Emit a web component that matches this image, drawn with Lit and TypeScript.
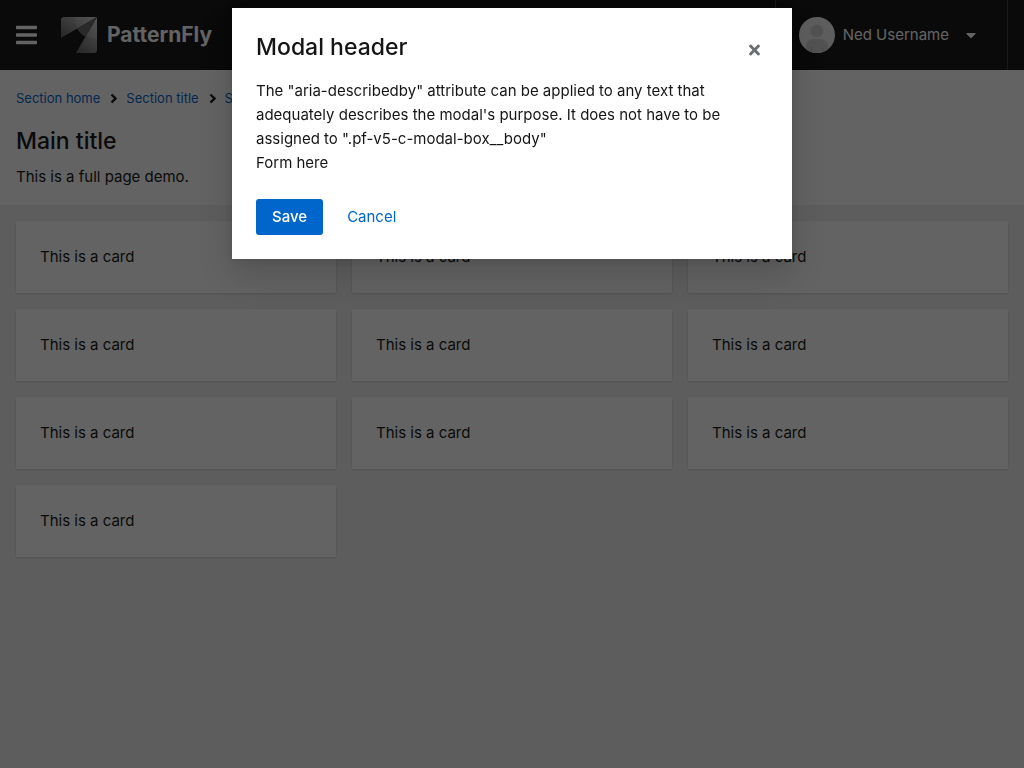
import { LitElement, html, css } from "lit";
import { customElement, state } from "lit/decorators.js";

const crumbs = ["Section home", "Section title", "Section title"];
const cards = Array.from({ length: 10 }, () => "This is a card");

@customElement("app-root")
export class AppRoot extends LitElement {
  @state() private modalOpen = true;

  static styles = css`
    :host {
      display: block;
      min-height: 100vh;
      background: #f0f0f0;
      color: #151515;
      font-family: Inter, "Liberation Sans", sans-serif;
      font-size: 15px;
      line-height: 24px;
    }
    * {
      box-sizing: border-box;
    }
    h1,
    p,
    ol,
    ul {
      margin: 0;
      padding: 0;
      list-style: none;
    }
    button {
      border: 0;
      background: none;
      color: inherit;
      font: inherit;
      cursor: pointer;
    }
    svg {
      display: block;
    }
    a {
      color: #06c;
      text-decoration: none;
    }
    .masthead {
      display: flex;
      align-items: center;
      height: 70px;
      padding: 0 16px;
      background: #151515;
      color: #fff;
    }
    .toggle {
      padding: 0;
      margin-right: 24px;
    }
    .brand {
      display: flex;
      align-items: center;
      gap: 10px;
      color: #fff;
      font-size: 21px;
      font-weight: 700;
    }
    .user {
      display: flex;
      align-items: center;
      gap: 8px;
      height: 100%;
      margin-left: auto;
      padding: 0 31px 0 23px;
      border: solid #3c3f42;
      border-width: 0 1px;
    }
    .caret {
      margin-left: 9px;
    }
    .intro {
      padding: 16px;
      background: #fff;
    }
    .crumbs {
      display: flex;
      margin-bottom: 16px;
      font-size: 13px;
    }
    .crumbs li {
      display: flex;
      align-items: center;
      white-space: nowrap;
    }
    .sep {
      margin: 0 9px 0 10px;
    }
    .title {
      font-size: 23px;
      line-height: 31px;
      font-weight: 500;
    }
    .intro .title {
      margin-bottom: 8px;
    }
    .cards {
      display: grid;
      grid-template-columns: repeat(auto-fill, minmax(250px, 1fr));
      gap: 16px;
      padding: 16px;
    }
    .card {
      padding: 24px;
      background: #fff;
      box-shadow: 0 1px 2px rgba(3, 3, 3, 0.12), 0 0 2px rgba(3, 3, 3, 0.06);
    }
    .backdrop {
      position: fixed;
      inset: 0;
      display: flex;
      justify-content: center;
      align-items: flex-start;
      padding: 8px;
      background: rgba(3, 3, 3, 0.62);
    }
    .modal {
      position: relative;
      width: 100%;
      max-width: 560px;
      padding: 24px;
      background: #fff;
      box-shadow: 0 16px 32px rgba(3, 3, 3, 0.16), 0 0 8px rgba(3, 3, 3, 0.1);
    }
    .modal .title {
      margin: 0 48px 16px 0;
    }
    .close {
      position: absolute;
      top: 24px;
      right: 16px;
      padding: 10px 16px;
      color: #6a6e73;
    }
    .actions {
      display: flex;
      gap: 8px;
      margin-top: 24px;
    }
    .btn {
      padding: 6px 16px;
      border-radius: 3px;
      color: #06c;
    }
    .primary {
      background: #06c;
      color: #fff;
      font-weight: 500;
    }
  `;

  private close() {
    this.modalOpen = false;
  }

  private renderMasthead() {
    return html`
      <header class="masthead">
        <button class="toggle" aria-label="Global navigation">
          <svg width="21" height="24" viewBox="0 0 448 512" fill="currentColor">
            <path
              d="M16 132h416c8.837 0 16-7.163 16-16V76c0-8.837-7.163-16-16-16H16C7.163 60 0 67.163 0 76v40c0 8.837 7.163 16 16 16zm0 160h416c8.837 0 16-7.163 16-16v-40c0-8.837-7.163-16-16-16H16c-8.837 0-16 7.163-16 16v40c0 8.837 7.163 16 16 16zm0 160h416c8.837 0 16-7.163 16-16v-40c0-8.837-7.163-16-16-16H16c-8.837 0-16 7.163-16 16v40c0 8.837 7.163 16 16 16z"
            />
          </svg>
        </button>
        <a class="brand" href="#">
          <svg width="36" height="36" viewBox="0 0 36 36" aria-hidden="true">
            <defs>
              <linearGradient id="wing" x1="1" y1="0" x2="0" y2="1">
                <stop offset="0" stop-color="#d0d0d0" />
                <stop offset="1" stop-color="#5c5c5c" />
              </linearGradient>
              <linearGradient id="tail" x1="0.8" y1="0" x2="0.3" y2="1">
                <stop offset="0" stop-color="#cccccc" />
                <stop offset="1" stop-color="#6a6a6a" />
              </linearGradient>
              <clipPath id="pieces">
                <path d="M0 21V3a3 3 0 0 1 3-3H36V33a3 3 0 0 1-3 3H15L36 0z" />
              </clipPath>
            </defs>
            <path d="M0 21V3a3 3 0 0 1 3-3H36z" fill="url(#wing)" />
            <path d="M36 0V33a3 3 0 0 1-3 3H15z" fill="url(#tail)" />
            <circle cx="36" cy="0" r="22" fill="#fff" opacity="0.14" clip-path="url(#pieces)" />
            <path d="M36 0L16 11.5Q19 17 24.5 20z" fill="#6a6a6a" />
          </svg>
          PatternFly
        </a>
        <button class="user">
          <svg width="36" height="36" viewBox="0 0 36 36" aria-hidden="true">
            <clipPath id="round"><circle cx="18" cy="18" r="18" /></clipPath>
            <g clip-path="url(#round)">
              <path fill="#f0f0f0" d="M0 0h36v36H0z" />
              <circle cx="18" cy="14" r="6.5" fill="#d2d2d2" />
              <path
                fill="#d2d2d2"
                d="M7 36v-6c0-5 3-8 8-8h6c5 0 8 3 8 8v6z"
              />
              <path fill="#b8bbbe" d="M12 30h1v6h-1zM23 30h1v6h-1z" />
            </g>
          </svg>
          <span>Ned Username</span>
          <svg class="caret" width="10" height="16" viewBox="0 0 320 512" fill="currentColor" aria-hidden="true">
            <path
              d="M31.3 192h257.3c17.8 0 26.7 21.5 14.1 34.1L174.1 354.8c-7.8 7.8-20.5 7.8-28.3 0L17.2 226.1C4.6 213.5 13.5 192 31.3 192z"
            />
          </svg>
        </button>
      </header>
    `;
  }

  private renderModal() {
    return html`
      <div class="backdrop">
        <div
          class="modal"
          role="dialog"
          aria-modal="true"
          aria-labelledby="modal-title"
          aria-describedby="modal-text"
        >
          <button class="close" aria-label="Close" @click=${this.close}>
            <svg width="11" height="16" viewBox="0 0 352 512" fill="currentColor">
              <path
                d="M242.72 256l100.07-100.07c12.28-12.28 12.28-32.19 0-44.48l-22.24-22.24c-12.28-12.28-32.19-12.28-44.48 0L176 189.28 75.93 89.21c-12.28-12.28-32.19-12.28-44.48 0L9.21 111.45c-12.28 12.28-12.28 32.19 0 44.48L109.28 256 9.21 356.07c-12.28 12.28-12.28 32.19 0 44.48l22.24 22.24c12.28 12.28 32.2 12.28 44.48 0L176 322.72l100.07 100.07c12.28 12.28 32.2 12.28 44.48 0l22.24-22.24c12.28-12.28 12.28-32.19 0-44.48L242.72 256z"
              />
            </svg>
          </button>
          <h1 class="title" id="modal-title">Modal header</h1>
          <p id="modal-text">
            The "aria-describedby" attribute can be applied to any text that
            adequately describes the modal's purpose. It does not have to be
            assigned to ".pf-v5-c-modal-box__body"
          </p>
          <p>Form here</p>
          <div class="actions">
            <button class="btn primary" @click=${this.close}>Save</button>
            <button class="btn" @click=${this.close}>Cancel</button>
          </div>
        </div>
      </div>
    `;
  }

  render() {
    return html`
      ${this.renderMasthead()}
      <main>
        <section class="intro">
          <nav aria-label="Breadcrumb">
            <ol class="crumbs">
              ${crumbs.map(
                (name, i) => html`
                  <li>
                    ${i > 0
                      ? html`<svg class="sep" width="7" height="11" viewBox="0 0 7 11" aria-hidden="true">
                          <path d="M1.5 1.5l4 4l-4 4" fill="none" stroke="#151515" stroke-width="2.4" />
                        </svg>`
                      : ""}
                    <a href="#">${name}</a>
                  </li>
                `
              )}
            </ol>
          </nav>
          <h1 class="title">Main title</h1>
          <p>This is a full page demo.</p>
        </section>
        <section class="cards">
          ${cards.map((text) => html`<article class="card">${text}</article>`)}
        </section>
      </main>
      ${this.modalOpen ? this.renderModal() : ""}
    `;
  }
}
